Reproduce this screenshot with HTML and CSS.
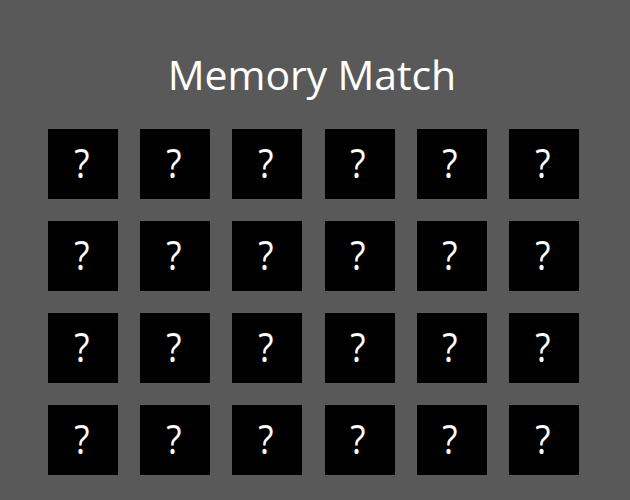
FILE: index.html
```html
<!DOCTYPE html>
<html lang="en">
<head>
<meta charset="utf-8">
<title>Memory Match</title>
<link rel="stylesheet" href="styles.css">
</head>
<body>
<main class="game">
  <h1 class="title">Memory Match</h1>
  <div class="board">
    <div class="card"><span class="mark">?</span></div><div class="card"><span class="mark">?</span></div><div class="card"><span class="mark">?</span></div><div class="card"><span class="mark">?</span></div><div class="card"><span class="mark">?</span></div><div class="card"><span class="mark">?</span></div>
    <div class="card"><span class="mark">?</span></div><div class="card"><span class="mark">?</span></div><div class="card"><span class="mark">?</span></div><div class="card"><span class="mark">?</span></div><div class="card"><span class="mark">?</span></div><div class="card"><span class="mark">?</span></div>
    <div class="card"><span class="mark">?</span></div><div class="card"><span class="mark">?</span></div><div class="card"><span class="mark">?</span></div><div class="card"><span class="mark">?</span></div><div class="card"><span class="mark">?</span></div><div class="card"><span class="mark">?</span></div>
    <div class="card"><span class="mark">?</span></div><div class="card"><span class="mark">?</span></div><div class="card"><span class="mark">?</span></div><div class="card"><span class="mark">?</span></div><div class="card"><span class="mark">?</span></div><div class="card"><span class="mark">?</span></div>
  </div>
</main>
</body>
</html>
```
FILE: styles.css
```css
html, body {
  margin: 0;
  height: 100%;
}

body {
  background: #595959;
  font-family: "Open Sans", "Noto Sans", sans-serif;
  color: #ffffff;
}

.game {
  display: flex;
  flex-direction: column;
  align-items: flex-start;
  padding: 46px 0 0 48px;
}

.title {
  width: 530px;
  margin: 0;
  font-size: 41px;
  font-weight: 400;
  line-height: 56px;
  text-align: center;
  letter-spacing: -0.1px;
  padding-right: 2px;
  box-sizing: border-box;
}

.board {
  display: grid;
  grid-template-columns: repeat(6, 70px);
  grid-auto-rows: 70px;
  gap: 22px 22.2px;
  margin-top: 27px;
}

.card {
  background: #000000;
  display: flex;
  align-items: center;
  justify-content: center;
  padding-right: 3px;
  padding-bottom: 3px;
  box-sizing: border-box;
}

.mark {
  display: inline-block;
  font-size: 41px;
  line-height: 1;
  transform: scaleX(0.86);
}
```
